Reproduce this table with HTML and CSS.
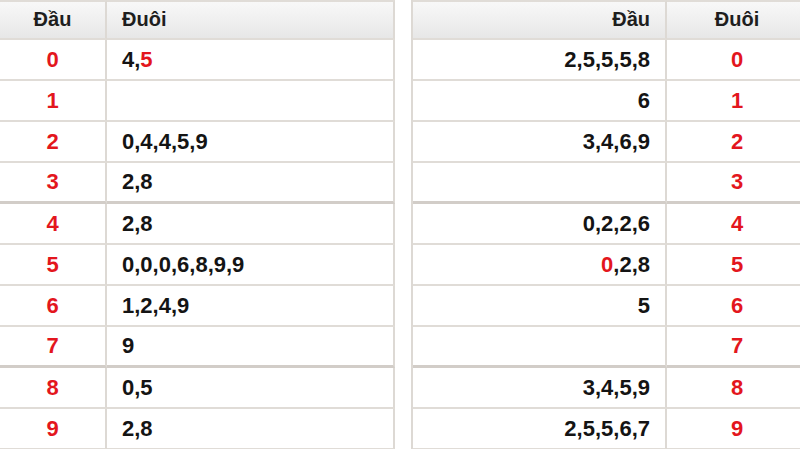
FILE: index.html
```html
<!DOCTYPE html>
<html lang="vi">
<head>
<meta charset="utf-8">
<title>Đầu Đuôi</title>
<link rel="stylesheet" href="styles.css">
</head>
<body>
<div class="page">
  <div class="tbl left">
    <div class="cell head c1">Đầu</div>
    <div class="cell head c2">Đuôi</div>

    <div class="cell c1 red">0</div><div class="cell c2">4,<span class="red">5</span></div>
    <div class="cell c1 red">1</div><div class="cell c2"></div>
    <div class="cell c1 red">2</div><div class="cell c2">0,4,4,5,9</div>
    <div class="cell c1 red sep">3</div><div class="cell c2 sep">2,8</div>
    <div class="cell c1 red">4</div><div class="cell c2">2,8</div>
    <div class="cell c1 red">5</div><div class="cell c2">0,0,0,6,8,9,9</div>
    <div class="cell c1 red">6</div><div class="cell c2">1,2,4,9</div>
    <div class="cell c1 red sep">7</div><div class="cell c2 sep">9</div>
    <div class="cell c1 red">8</div><div class="cell c2">0,5</div>
    <div class="cell c1 red">9</div><div class="cell c2">2,8</div>
  </div>

  <div class="tbl right">
    <div class="cell head c1">Đầu</div>
    <div class="cell head c2">Đuôi</div>

    <div class="cell c1">2,5,5,5,8</div><div class="cell c2 red">0</div>
    <div class="cell c1">6</div><div class="cell c2 red">1</div>
    <div class="cell c1">3,4,6,9</div><div class="cell c2 red">2</div>
    <div class="cell c1 sep"></div><div class="cell c2 red sep">3</div>
    <div class="cell c1">0,2,2,6</div><div class="cell c2 red">4</div>
    <div class="cell c1"><span class="red">0</span>,2,8</div><div class="cell c2 red">5</div>
    <div class="cell c1">5</div><div class="cell c2 red">6</div>
    <div class="cell c1 sep"></div><div class="cell c2 red sep">7</div>
    <div class="cell c1">3,4,5,9</div><div class="cell c2 red">8</div>
    <div class="cell c1">2,5,5,6,7</div><div class="cell c2 red">9</div>
  </div>
</div>
</body>
</html>
```

FILE: styles.css
```css
html, body {
  margin: 0;
  padding: 0;
  background: #ffffff;
  overflow: hidden;
}

.page {
  display: flex;
  gap: 16px;
  width: 820px;
  font-family: "Liberation Sans", Arial, sans-serif;
  font-weight: bold;
  color: #141414;
}

.tbl {
  display: grid;
  grid-template-rows: 40px repeat(10, 41px);
  flex: none;
}

.left {
  grid-template-columns: 107px 288px;
}

.right {
  grid-template-columns: 254px 140px;
  border-left: 2px solid #ddd9d4;
}

.cell {
  box-sizing: border-box;
  display: flex;
  align-items: center;
  font-size: 22px;
  border-bottom: 2px solid #e0dcd7;
}

.cell.sep {
  border-bottom: 3px solid #d2cdc8;
}

.head {
  font-size: 20px;
  color: #1e1e1e;
  border-top: 2px solid #e0dcd7;
  background: linear-gradient(#f8f8f8, #e7e7e7);
  padding-bottom: 2px;
}

.c1 {
  border-right: 2px solid #ddd9d4;
}

.left .c1 {
  justify-content: center;
}

.left .c2 {
  padding-left: 15px;
  border-right: 2px solid #ddd9d4;
}

.right .c1 {
  justify-content: flex-end;
  padding-right: 15px;
}

.right .c2 {
  justify-content: center;
}

.red {
  color: #e3161d;
}
```
